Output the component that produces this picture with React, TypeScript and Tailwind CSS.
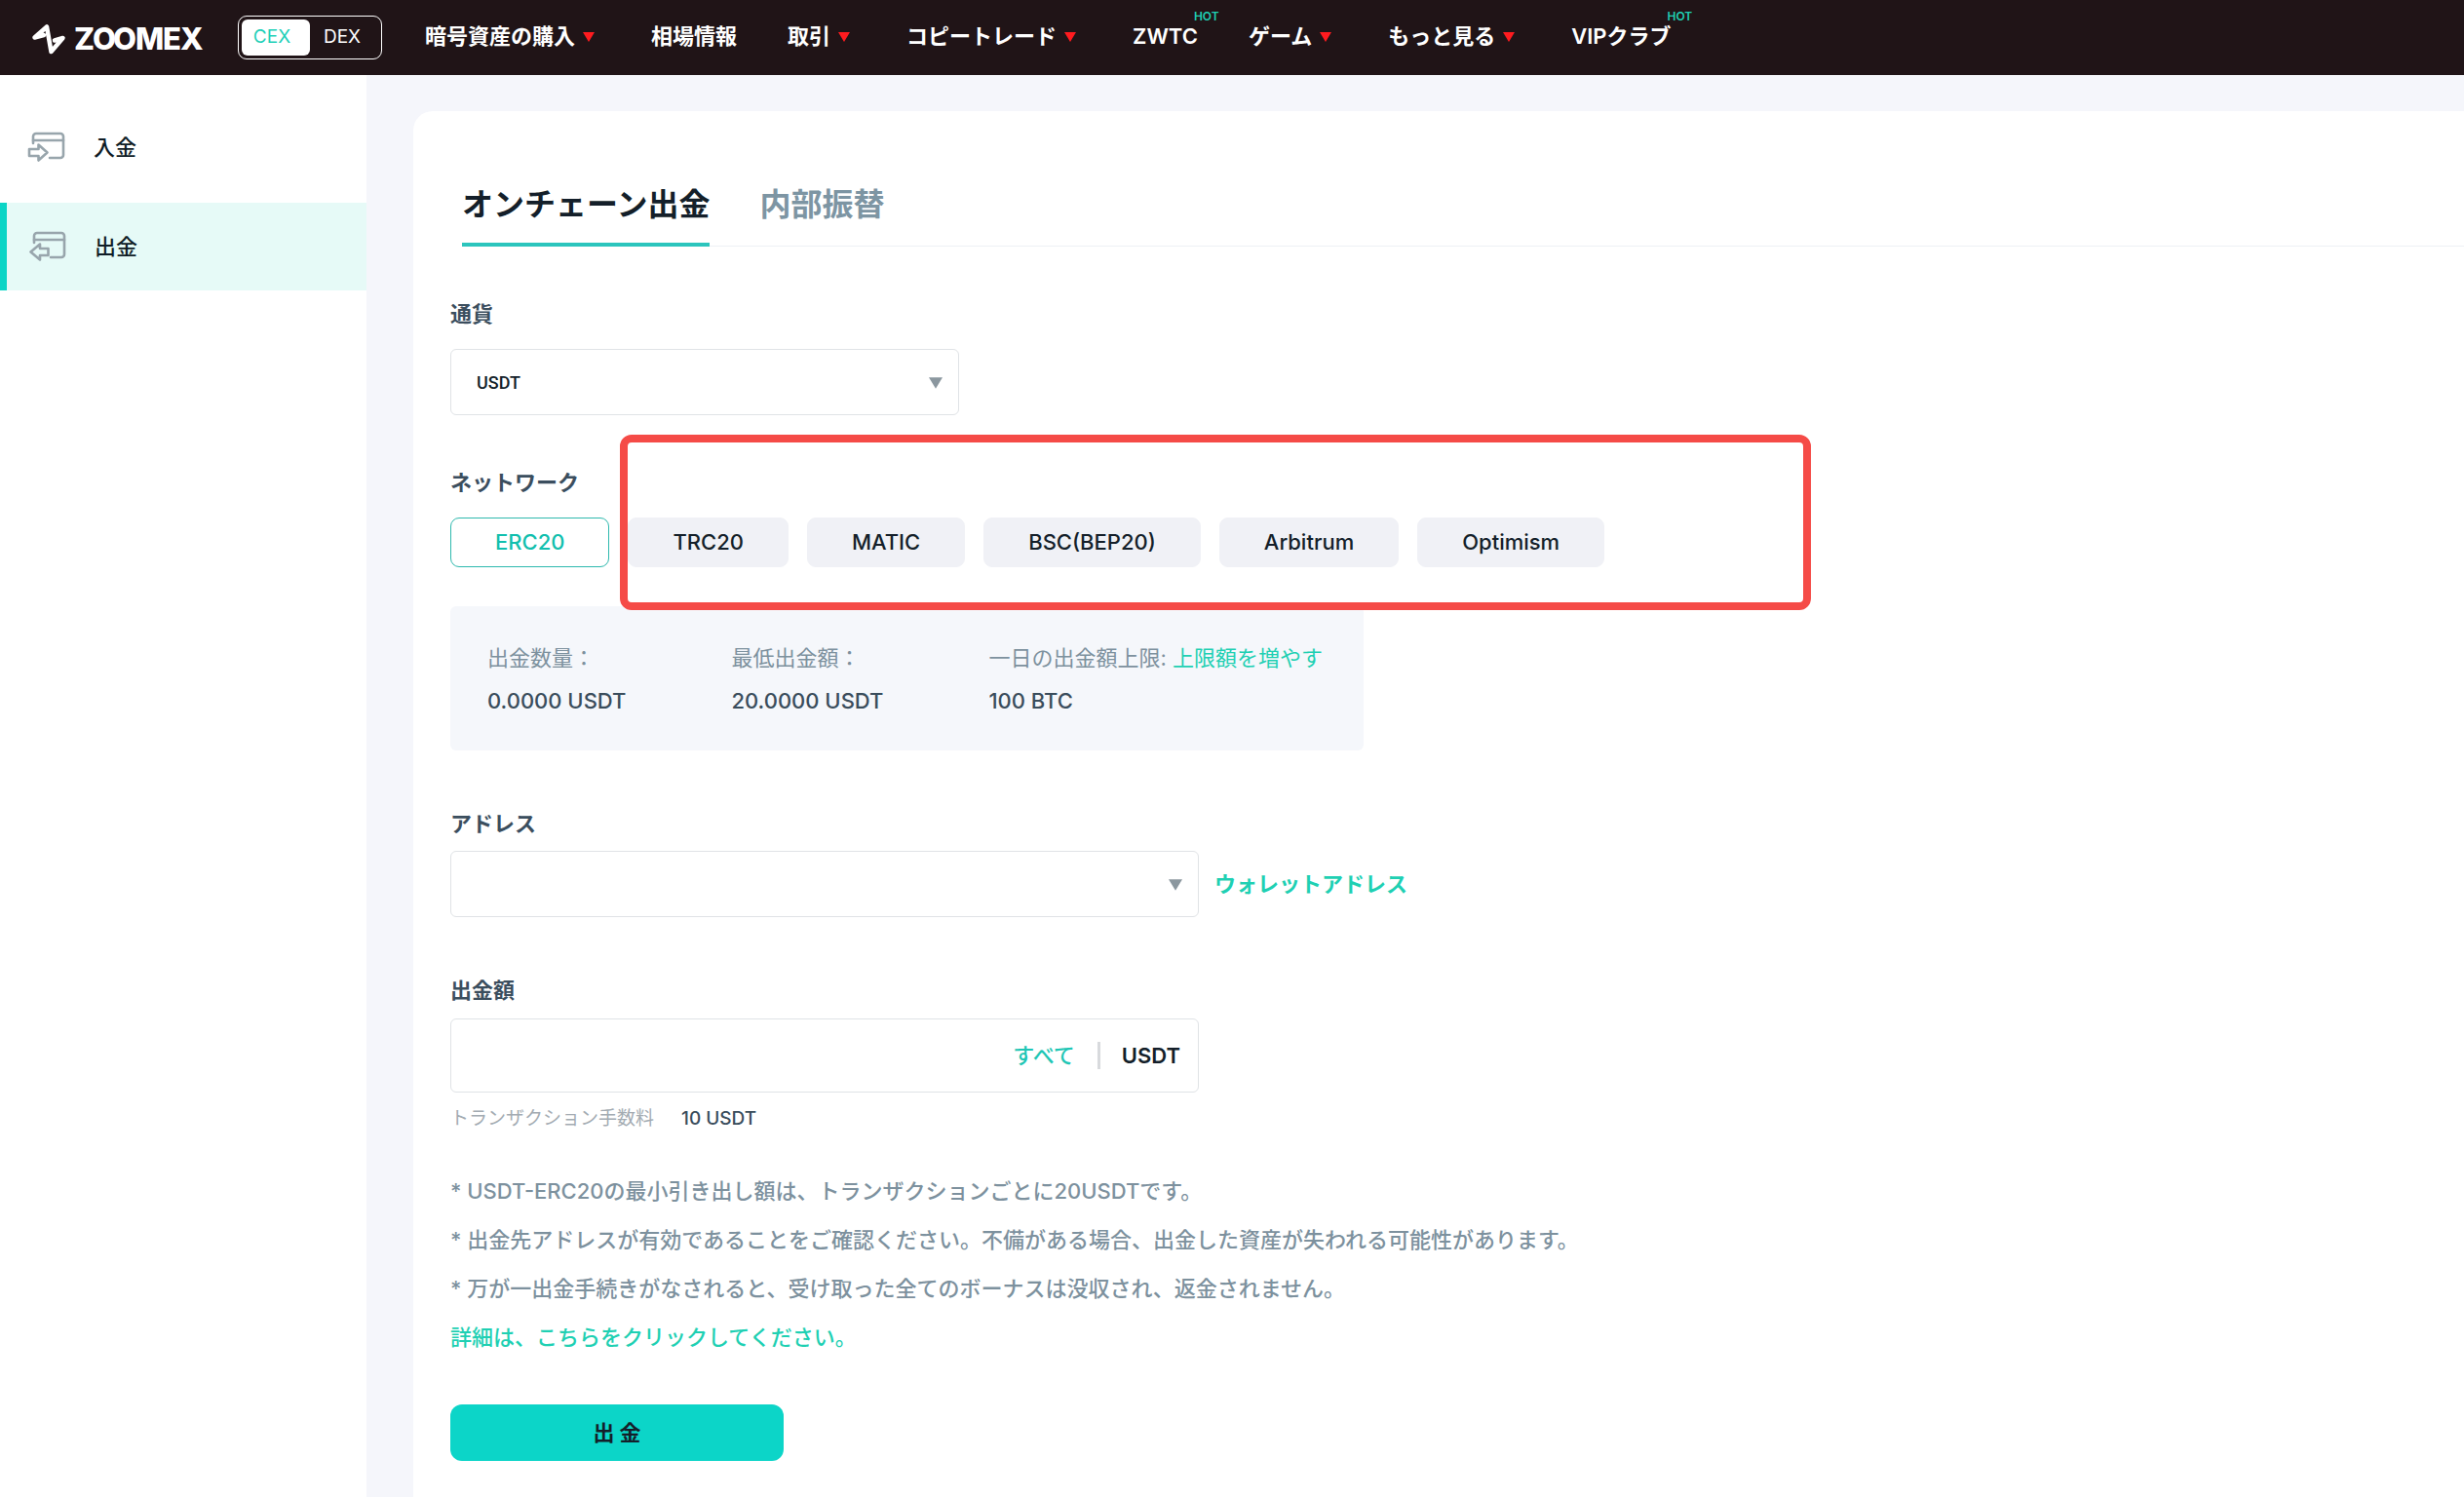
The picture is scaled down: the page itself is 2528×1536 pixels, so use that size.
import React, { useState } from 'react';
import clsx from 'clsx';

const navItems = [
  { name: '暗号資産の購入', caret: true },
  { name: '相場情報' },
  { name: '取引', caret: true },
  { name: 'コピートレード', caret: true },
  { name: 'ZWTC', hot: true },
  { name: 'ゲーム', caret: true },
  { name: 'もっと見る', caret: true },
  { name: 'VIPクラブ', hot: true },
];

const networks = ['ERC20', 'TRC20', 'MATIC', 'BSC(BEP20)', 'Arbitrum', 'Optimism'];

const notes = [
  '* USDT-ERC20の最小引き出し額は、トランザクションごとに20USDTです。',
  '* 出金先アドレスが有効であることをご確認ください。不備がある場合、出金した資産が失われる可能性があります。',
  '* 万が一出金手続きがなされると、受け取った全てのボーナスは没収され、返金されません。',
];

function Caret({ className }: { className?: string }) {
  return (
    <svg viewBox="0 0 12 10" className={className} aria-hidden="true">
      <path d="M0 0h12L6 10z" fill="currentColor" />
    </svg>
  );
}

function Logo() {
  return (
    <a href="#" aria-label="ZOOMEX" className="block shrink-0">
      <svg width="184" height="40" viewBox="0 0 184 40" aria-hidden="true">
        <path
          d="M16 17L6.500 19.500L19 8.500L23.500 34L35.500 20L27 22.500"
          fill="none"
          stroke="#fff"
          strokeWidth="4.5"
          strokeLinejoin="round"
          strokeLinecap="round"
        />
        <text
          x="47 66 87 110 138 156"
          y="32"
          fill="#fff"
          className="font-['Inter',sans-serif] text-[31px] font-extrabold"
        >
          ZOOMEX
        </text>
      </svg>
    </a>
  );
}

function CardIcon({ direction }: { direction: 'in' | 'out' }) {
  return (
    <svg
      width="40"
      height="32"
      viewBox="0 0 40 32"
      fill="none"
      stroke="#98a5ac"
      strokeWidth="2.6"
      strokeLinejoin="round"
      strokeLinecap="round"
      aria-hidden="true"
    >
      <path d="M6 12V5a3 3 0 0 1 3-3h25a3 3 0 0 1 3 3v19a3 3 0 0 1-3 3H23" />
      <path d="M6 9h31" />
      {direction === 'in' ? (
        <path d="M2 18h9.500v-4.500l9 8-9 8V25H2z" />
      ) : (
        <path d="M20.500 18H12v-4.500l-9.500 8 9.500 8V25h8.500z" />
      )}
    </svg>
  );
}

function Header() {
  return (
    <header className="flex h-[77px] items-center bg-[#201417] pl-[29px] text-white">
      <Logo />
      <div className="ml-[31px] flex h-[45px] w-[148px] shrink-0 rounded-[9px] border border-white p-[3px] text-[19px]">
        <button className="w-[70px] rounded-md bg-white pr-2 text-[#1fd0b8]">CEX</button>
        <button className="w-[70px] pr-1">DEX</button>
      </div>
      <nav className="ml-[44px] flex items-center gap-[52px] pb-0.5 text-[22px] font-semibold whitespace-nowrap">
        {navItems.map((item) => (
          <a
            key={item.name}
            href="#"
            className={clsx('relative flex items-center', item.caret && 'gap-2 pr-1.5')}
          >
            {item.name}
            {item.caret && <Caret className="h-[10px] w-[12px] text-[#ff1b1f]" />}
            {item.hot && (
              <span className="absolute -top-3 left-full -ml-1 text-xs leading-4 font-semibold text-[#1fd0b3]">
                HOT
              </span>
            )}
          </a>
        ))}
      </nav>
    </header>
  );
}

function Sidebar() {
  return (
    <aside className="w-[376px] shrink-0 bg-white pt-[29px]">
      <nav className="flex flex-col gap-3 text-[22px] font-medium text-[#0f1c26]">
        <a href="#" className="flex h-[90px] items-center gap-7 pl-[28px]">
          <CardIcon direction="in" />
          入金
        </a>
        <a
          href="#"
          aria-current="page"
          className="flex h-[90px] items-center gap-7 border-l-[7px] border-[#0bd5c6] bg-[#e6faf7] pl-[22px]"
        >
          <CardIcon direction="out" />
          出金
        </a>
      </nav>
    </aside>
  );
}

function Limits() {
  return (
    <dl className="mt-[40px] flex h-[148px] w-fit gap-[108px] rounded-md bg-[#f5f7fb] pt-[31px] pr-[42px] pl-[38px] text-[22px] leading-[44px] whitespace-nowrap">
      <div>
        <dt className="text-[#7d919e]">出金数量：</dt>
        <dd className="font-medium text-[#3a4d5c]">0.0000 USDT</dd>
      </div>
      <div>
        <dt className="text-[#7d919e]">最低出金額：</dt>
        <dd className="font-medium text-[#3a4d5c]">20.0000 USDT</dd>
      </div>
      <div>
        <dt className="text-[#7d919e]">
          一日の出金額上限:{' '}
          <a href="#" className="text-[#1fd0b3]">
            上限額を増やす
          </a>
        </dt>
        <dd className="font-medium text-[#3a4d5c]">100 BTC</dd>
      </div>
    </dl>
  );
}

export default function App() {
  const [network, setNetwork] = useState('ERC20');
  const labelClass = 'block text-[22px] leading-8 font-semibold text-[#3b4e5e]';

  return (
    <div className="flex min-h-screen flex-col overflow-hidden bg-[#f5f6fb] font-['Inter','Noto_Sans_CJK_JP',sans-serif]">
      <Header />
      <div className="flex flex-1">
        <Sidebar />
        <main className="ml-[48px] mt-[37px] min-w-0 flex-1 rounded-tl-[20px] bg-white pt-[72px] pl-[38px]">
          <div role="tablist" className="ml-[12px] flex h-[67px] gap-[51px] border-b border-[#eef1f4] text-[32px] leading-[48px] font-bold">
            <button role="tab" aria-selected="true" className="-mb-px flex border-b-4 border-[#2cc5bd] text-[#141f2a]">
              オンチェーン出金
            </button>
            <button role="tab" aria-selected="false" className="flex text-[#7d95a3]">
              内部振替
            </button>
          </div>

          <form onSubmit={(e) => e.preventDefault()} className="mt-[53px]">
            <label htmlFor="currency" className={labelClass}>
              通貨
            </label>
            <div className="relative mt-[20px] w-[522px]">
              <select
                id="currency"
                className="h-[68px] w-full appearance-none rounded-md border border-[#e0e3e6] bg-white pt-0.5 pl-[26px] font-['Roboto',sans-serif] text-lg font-medium text-[#141f2a]"
              >
                <option>USDT</option>
              </select>
              <Caret className="pointer-events-none absolute top-[29px] right-[17px] h-[12px] w-[14px] text-[#8b979f]" />
            </div>

            <div className="relative mt-[53px]">
              <h2 className={labelClass}>ネットワーク</h2>
              <div className="mt-[20px] flex gap-[19px] text-[22px] font-medium">
                {networks.map((name) => (
                  <button
                    key={name}
                    type="button"
                    onClick={() => setNetwork(name)}
                    className={clsx(
                      'h-[51px] rounded-[9px] border px-[45px]',
                      name === network
                        ? 'border-[#2fb9ae] bg-white text-[#12bfae]'
                        : 'border-[#f0f1f6] bg-[#f0f1f6] text-[#141f2a]'
                    )}
                  >
                    {name}
                  </button>
                ))}
              </div>
              {/* highlight frame around the extra networks */}
              <div className="pointer-events-none absolute -top-[33px] left-[174px] h-[180px] w-[1222px] rounded-xl border-8 border-[#f54b47]" />
            </div>

            <Limits />

            <label htmlFor="address" className={clsx(labelClass, 'mt-[59px]')}>
              アドレス
            </label>
            <div className="mt-[12px] flex items-center gap-[16px]">
              <div className="relative w-[768px]">
                <select
                  id="address"
                  className="h-[68px] w-full appearance-none rounded-md border border-[#e0e3e6] bg-white px-[26px] text-lg"
                />
                <Caret className="pointer-events-none absolute top-[29px] right-[17px] h-[12px] w-[14px] text-[#8b979f]" />
              </div>
              <a href="#" className="text-[22px] font-semibold text-[#1fd0b3]">
                ウォレットアドレス
              </a>
            </div>

            <label htmlFor="amount" className={clsx(labelClass, 'mt-[59px]')}>
              出金額
            </label>
            <div className="mt-[13px] flex h-[76px] w-[768px] items-center rounded-md border border-[#e0e3e6] pr-[18px] text-[22px]">
              <input id="amount" type="text" className="h-full min-w-0 flex-1 px-[26px] outline-none" />
              <button type="button" className="font-medium text-[#1fc6b5]">
                すべて
              </button>
              <span className="mr-[22px] ml-[23px] h-[28px] w-[3px] bg-[#d8dadd]" />
              <span className="font-semibold text-[#141f2a]">USDT</span>
            </div>
            <p className="mt-[11px] flex gap-[28px] text-[19px] leading-8">
              <span className="text-[#a3abb2]">トランザクション手数料</span>
              <span className="font-medium text-[#3a4d5c]">10 USDT</span>
            </p>

            <div className="mt-[33px] text-[22px] leading-[50px] text-[#7d919e]">
              {notes.map((note) => (
                <p key={note} className="font-medium">
                  {note}
                </p>
              ))}
              <a href="#" className="font-medium text-[#1fd0b3]">
                詳細は、こちらをクリックしてください。
              </a>
            </div>

            <button
              type="submit"
              className="mt-[44px] h-[58px] w-[342px] rounded-xl bg-[#0cd5c8] text-[22px] font-bold text-[#141f2a]"
            >
              出 金
            </button>
          </form>
        </main>
      </div>
    </div>
  );
}
